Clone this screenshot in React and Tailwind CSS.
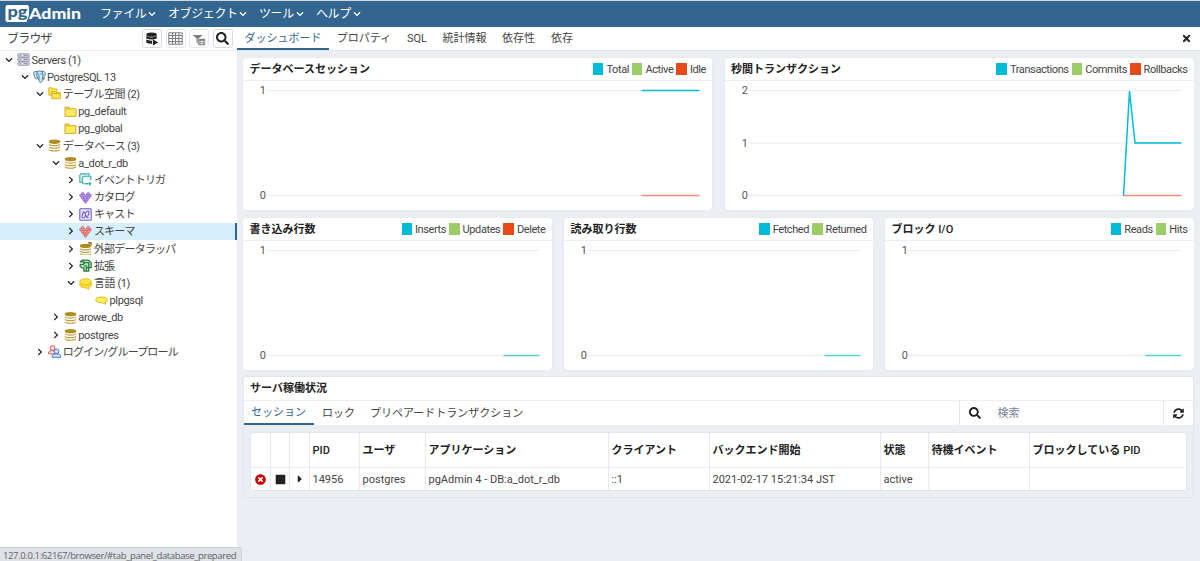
import { useState } from "react";
import clsx from "clsx";
import { FaCaretRight, FaChevronDown, FaChevronRight, FaSearch, FaSquare, FaSyncAlt, FaTimes, FaTimesCircle } from "react-icons/fa";

const CYAN = "#00bcd7";
const GREEN = "#9ccc65";
const RED = "#e64a19";

const MENUS = [
  { label: "ファイル", width: "w-[48px]", gap: "ml-[19px]" },
  { label: "オブジェクト", width: "w-[71px]", gap: "ml-[12px]" },
  { label: "ツール", width: "w-[37px]", gap: "ml-[12px]" },
  { label: "ヘルプ", width: "w-[37px]", gap: "ml-[12px]" },
];

const TABS = [
  { label: "ダッシュボード", width: "w-[92px]" },
  { label: "プロパティ", width: "w-[70px]" },
  { label: "SQL", width: "w-[36px]" },
  { label: "統計情報", width: "w-[59px]" },
  { label: "依存性", width: "w-[49px]" },
  { label: "依存", width: "w-[38px]" },
];

const TREE = [
  { label: "Servers (1)", depth: 0, icon: "servers", open: true },
  { label: "PostgreSQL 13", depth: 1, icon: "elephant", open: true },
  { label: "テーブル空間 (2)", depth: 2, icon: "folders", open: true, tracking: "tracking-[-0.5px]" },
  { label: "pg_default", depth: 3, icon: "folder" },
  { label: "pg_global", depth: 3, icon: "folder" },
  { label: "データベース (3)", depth: 2, icon: "databases", open: true, tracking: "tracking-[-0.5px]" },
  { label: "a_dot_r_db", depth: 3, icon: "database", open: true },
  { label: "イベントトリガ", depth: 4, icon: "trigger", open: false, tracking: "tracking-[-0.8px]" },
  { label: "カタログ", depth: 4, icon: "catalog", open: false, tracking: "tracking-[-0.8px]" },
  { label: "キャスト", depth: 4, icon: "cast", open: false, tracking: "tracking-[-0.8px]" },
  { label: "スキーマ", depth: 4, icon: "schema", open: false, tracking: "tracking-[-0.8px]" },
  { label: "外部データラッパ", depth: 4, icon: "wrapper", open: false, tracking: "tracking-[-0.8px]" },
  { label: "拡張", depth: 4, icon: "extension", open: false, tracking: "tracking-[-0.8px]" },
  { label: "言語 (1)", depth: 4, icon: "languages", open: true, tracking: "tracking-[-0.4px]" },
  { label: "plpgsql", depth: 5, icon: "language" },
  { label: "arowe_db", depth: 3, icon: "database", open: false },
  { label: "postgres", depth: 3, icon: "database", open: false },
  { label: "ログイン/グループロール", depth: 2, icon: "roles", open: false, tracking: "tracking-[-0.8px]" },
];

const COLUMNS = [
  { label: "", value: <FaTimesCircle className="mx-auto text-[#cc0000]" size={11} />, width: "w-[20px]" },
  { label: "", value: <FaSquare className="mx-auto" size={11} />, width: "w-[19px]" },
  { label: "", value: <FaCaretRight className="mx-auto" size={12} />, width: "w-[20px]" },
  { label: <span className="font-medium">PID</span>, value: "14956", width: "w-[50px]" },
  { label: "ユーザ", value: "postgres", width: "w-[66px]" },
  { label: "アプリケーション", value: "pgAdmin 4 - DB:a_dot_r_db", width: "w-[183px]" },
  { label: "クライアント", value: "::1", width: "w-[101px]" },
  { label: "バックエンド開始", value: "2021-02-17 15:21:34 JST", width: "w-[171px]" },
  { label: "状態", value: "active", width: "w-[48px]" },
  { label: "待機イベント", value: "", width: "w-[101px]" },
  { label: <>ブロックしている<span className="ml-[3px] font-medium">PID</span></>, value: "", width: "w-[155px]" },
];

// stack of flat disks with light gaps between them
function Disks({ y = 1 }) {
  return (
    <g>
      <path d={`M1 ${y + 2.5}q0-2.300 7-2.300t7 2.300v.8q0 2.200-7 2.200t-7-2.200z`} fill="#ad8e22" />
      {[5, 8.2, 11.4].map((dy) => (
        <path key={dy} d={`M1 ${y + dy}q1 2 7 2t7-2v1.200q0 2.200-7 2.200t-7-2.200z`} fill="#bfa03a" />
      ))}
    </g>
  );
}

function Hearts({ color, fill }) {
  const dots = [[4.5, 3.2], [11.5, 3.2], [2.3, 5.6], [6.1, 5.6], [9.9, 5.6], [13.7, 5.6], [4.2, 8.2], [8, 8.2], [11.8, 8.2], [6.1, 10.8], [9.9, 10.8], [8, 13.4]];
  return (
    <g fill={fill} stroke={color} strokeWidth="1">
      {dots.map(([x, y]) => (
        <circle key={`${x}-${y}`} cx={x} cy={y} r="1.500" />
      ))}
    </g>
  );
}

const ICONS = {
  servers: (
    <g fill="#e6e6ee" stroke="#8d8da6" strokeWidth="1.2">
      <rect x="1" y="1" width="14" height="4" rx="1" />
      <rect x="1" y="6" width="14" height="4" rx="1" />
      <rect x="1" y="11" width="14" height="4" rx="1" />
      <path d="M3 3h2M3 8h2M3 13h2M8 3h5M8 8h5M8 13h5" />
    </g>
  ),
  elephant: (
    <g fill="#d7e8f2" stroke="#336f9b" strokeWidth="1.1" strokeLinejoin="round" strokeLinecap="round">
      <path d="M5 2.2C2.5 .8 .8 2 1 4.6c.2 2.5 1.3 6 2.8 6.4 1 .2 1.6-1 1.8-1.8" />
      <path d="M5 2.2C8 .4 9.8 1 10.8 2 13 .8 15.3 2 15 4.7c-.3 2.6-1.4 4.5-2.6 5.5l2 .3c-1 1.2-2.3 1.1-3 .8.1 2.6-.5 4-2.1 4-1.7 0-2-1.3-2-4C5 10.4 3.8 7 5 2.2Z" />
      <path d="M10.8 2c1.8 2 1.9 5.2.6 8M7.3 11.3V6.5M5.8 5h1.4M9.6 5h.8" fill="none" />
    </g>
  ),
  folders: (
    <g fill="#fbe74a" stroke="#cfaf25" strokeWidth="1.1">
      <path d="M1 1h4l1 1.400h5V10H1z" />
      <path d="M4.500 5.500h4l1.300 1.600H15.300V14.500H4.500z" />
      <path d="M4.500 8h10.500" />
    </g>
  ),
  folder: (
    <g fill="#fbea62" stroke="#cfaf25" strokeWidth="1.2">
      <path d="M1.2 2.5h5l1.5 2h7v9.5H1.2z" />
      <path d="M1.5 4.8h6" />
    </g>
  ),
  databases: <Disks y={0.5} />,
  database: <Disks />,
  trigger: (
    <g fill="#e3f7f9" stroke="#39a8b1" strokeWidth="1.4" strokeLinejoin="round">
      <path d="M3 11.500H1V2.500L2.500 1H12.500v2.500" />
      <path d="M4 5.500L5.500 4h9v5M4 5.500V12l1 1.200h6" />
      <path d="M8 13.200h6.500m-2-2 2 2-2 2" fill="none" />
    </g>
  ),
  catalog: <Hearts color="#8b5fcf" fill="#c3a5ea" />,
  cast: (
    <g fill="#eeeafd" stroke="#6457c5" strokeWidth="1.3">
      <rect x="1" y="1" width="14" height="14" rx="1" />
      <ellipse cx="6" cy="9" rx="2" ry="3.5" transform="rotate(20 6 9)" />
      <ellipse cx="10" cy="7" rx="2" ry="3.5" transform="rotate(20 10 7)" />
      <path d="M4 5h3M9 12h3" />
    </g>
  ),
  schema: <Hearts color="#d45b5b" fill="#eea9a9" />,
  wrapper: (
    <g>
      <Disks y={2} />
      <path d="M9.500 5l5-4M11 .8h4v3.600" fill="none" stroke="#a6882a" strokeWidth="1.500" />
    </g>
  ),
  extension: (
    <g fill="#bfe6c4" stroke="#21793a" strokeWidth="1.500" strokeLinejoin="round">
      <path d="M1.500 3.500L4 1.500h7.500l3.500 3v6h-3v4.500H6V11H3.500L1.500 9V6.500H6V3.500z" />
      <path d="M6 6.500V4.500h6v6H9v4" />
      <path d="M6 8.500h4" />
    </g>
  ),
  languages: (
    <g fill="#fbe23c" stroke="#d8b414" strokeWidth="0.9">
      <path d="M1 8v2c0 2 3 3.300 7 3.300l4.500 2-1-2.300c2.500-.5 3.800-1.500 3.800-3V7z" />
      <path d="M.8 6c0-2.500 3-4 7.200-4s7.200 1.500 7.200 4-3 4-7.200 4S.8 8.500.8 6z" />
    </g>
  ),
  language: (
    <path d="M.8 7c0-2 3-3.300 7.200-3.300s7.200 1.300 7.200 3.300-1.500 2.700-3.300 3l1.500 2.300c-3 0-4.500-1-5.300-2C4 10.300.8 9.500.8 7z" fill="#fdf04f" stroke="#cfaa13" strokeWidth="1" />
  ),
  roles: (
    <g strokeWidth="1.2">
      <g fill="#fbdcdc" stroke="#d15b5b">
        <circle cx="5.500" cy="3.800" r="3" />
        <path d="M.8 11V8.500L3 7h5l2 1.500V11z" />
      </g>
      <g fill="#cfe3fa" stroke="#3f78c0">
        <circle cx="10.500" cy="7.800" r="2.900" />
        <path d="M5.300 15.200V12.500L7.500 11h6l2 1.500v2.700z" />
      </g>
    </g>
  ),
};

function TreeIcon({ name }) {
  return (
    <svg viewBox="0 0 16 16" className="ml-[3px] h-[13px] w-[13px] shrink-0">
      {ICONS[name]}
    </svg>
  );
}

function Logo() {
  return (
    <svg className="ml-[5px] h-[24px] w-[78px] shrink-0" viewBox="0 0 78 24">
      <path d="M2.500 3H21.500Q24 3 24 5.500V13L21.500 20H2.500Q.5 20 .5 18V5Q.5 3 2.500 3Z" fill="#fff" />
      <text x="2.500" y="14.500" fontSize="14.500" fontWeight="900" textLength="20" lengthAdjust="spacingAndGlyphs" fill="#326690" fontFamily="Lato, sans-serif">pg</text>
      <text x="24" y="16.500" fontSize="15.500" fontWeight="900" textLength="52" lengthAdjust="spacingAndGlyphs" fill="#fff" fontFamily="Lato, sans-serif">Admin</text>
    </svg>
  );
}

function ToolButton({ children, dim }) {
  return (
    <button className={clsx("flex h-[19px] w-[20px] items-center justify-center rounded-[3px] border", dim ? "border-[#e6e9ef] text-[#7b7b7b]" : "border-[#d5dae3] text-[#222]")}>
      {children}
    </button>
  );
}

function Sidebar() {
  return (
    <aside className="flex w-[237px] shrink-0 flex-col bg-white">
      <div className="flex h-[24px] shrink-0 items-center border-b border-[#ebeef3] pl-[7px]">
        <span className="grow text-[12px] tracking-[-0.8px]">ブラウザ</span>
        <div className="flex gap-[3.500px] pr-[4.500px]">
          <ToolButton>
            <svg viewBox="0 0 16 16" className="h-[14px] w-[14px]" fill="currentColor">
              <ellipse cx="7.500" cy="3" rx="6" ry="2.400" />
              <path d="M1.500 4.700q6 3 12 0v2.800q-6 2.400-12 0zM1.500 8.700q3.500 1.500 6.500 1.200v3.600q-4 .2-6.500-1.200zM9 8.300l6 3.600-6 3.600z" />
            </svg>
          </ToolButton>
          <ToolButton dim>
            <svg viewBox="0 0 15 13" className="h-[13px] w-[15px]" fill="none" stroke="currentColor">
              <path d="M.8.8h13.400v11.400H.8zM.8 3.500h13.400M.8 6.500h13.400M.8 9.500h13.400M4.500.8v11.400M7.500.8v11.400M10.800.8v11.400" />
            </svg>
          </ToolButton>
          <ToolButton dim>
            <svg viewBox="0 0 15 13" className="mt-[3px] h-[12px] w-[14px]" fill="currentColor">
              <path d="M.5 1h11L7.500 4.500V11L4.800 9V4.500z" />
              <path d="M6.500 5h8v7.500h-8z" stroke="#fff" strokeWidth=".6" />
              <path d="M7.500 8h6.500M7.500 10h6.500M10.600 7v5" stroke="#fff" strokeWidth=".7" />
            </svg>
          </ToolButton>
          <ToolButton>
            <FaSearch size={13} />
          </ToolButton>
        </div>
      </div>
      <ul>
        {TREE.map((node) => {
          const Chevron = node.open ? FaChevronDown : FaChevronRight;
          return (
            <li
              key={node.label}
              className={clsx("flex h-[17.200px] items-center whitespace-nowrap pl-[4px] text-[11px]", node.icon === "schema" && "border-r-2 border-[#326690] bg-[#d6effc]")}
            >
              <span className="shrink-0" style={{ width: node.depth * 15.6 }} />
              <span className="flex w-[10px] shrink-0 justify-center text-[#222]">
                {node.open !== undefined && <Chevron size={8} />}
              </span>
              <TreeIcon name={node.icon} />
              <span className={clsx("ml-[1.500px] pt-px", node.tracking || "tracking-[-0.350px]")}>{node.label}</span>
            </li>
          );
        })}
      </ul>
    </aside>
  );
}

function Chart({ title, legend, width, ticks, children }) {
  return (
    <section className="flex h-[152px] flex-col overflow-hidden rounded-[3px] bg-white shadow-[0_0_1px_#c5ccd8]" style={{ width }}>
      <header className="flex h-[23px] shrink-0 items-center border-b border-[#ebeef3] pl-[6.500px] pr-[6px]">
        <h3 className="grow text-[11px] font-bold text-[#222]">{title}</h3>
        <div className="flex gap-[3px] text-[11px] tracking-[-0.400px]">
          {legend.map(([name, color]) => (
            <span key={name} className="flex items-center gap-[3px]">
              <i className="h-[12px] w-[10.500px]" style={{ background: color }} />
              {name}
            </span>
          ))}
        </div>
      </header>
      <svg width={width} height="129" className="shrink-0 text-[11px]">
        {ticks.map((tick, i) => {
          const y = 9 + (i * 105) / (ticks.length - 1);
          return (
            <g key={tick}>
              <text x="23" y={y + 4} textAnchor="end" fill="#555">{tick}</text>
              <path d={`M23.500 ${y + 0.5}H${width - 12.5}`} stroke="#e9eaec" />
            </g>
          );
        })}
        {children}
      </svg>
    </section>
  );
}

function Activity() {
  return (
    <section className="flex h-[122px] flex-col overflow-hidden rounded-[3px] border border-[#e1e5ec] bg-[#ebeef3]">
      <h3 className="flex h-[24px] shrink-0 items-center border-b border-[#ebeef3] bg-white pl-[6px] text-[11px] font-bold text-[#222]">サーバ稼働状況</h3>
      <div className="flex h-[24px] shrink-0 bg-white text-[11px]">
        <span className="-ml-px flex w-[71px] items-center justify-center border-b-2 border-[#326690] pt-px text-[#326690]">セッション</span>
        <span className="flex w-[49px] items-center justify-center">ロック</span>
        <span className="flex items-center pl-[7px]">プリペアードトランザクション</span>
        <div className="ml-auto flex w-[205px] items-center border-x border-[#e1e5ec] pl-[9px]">
          <FaSearch size={12} className="text-[#222]" />
          <span className="ml-[17px] text-[#7b8294]">検索</span>
        </div>
        <span className="flex w-[29px] items-center justify-center text-[#222]">
          <FaSyncAlt size={11} />
        </span>
      </div>
      <div className="mx-[6px] mt-[7px] flex h-[59px] overflow-hidden rounded-[3px] border border-[#e1e5ec] bg-white text-[11px]">
        {COLUMNS.map((col, i) => (
          <div key={i} className={clsx("flex shrink-0 flex-col whitespace-nowrap border-r border-[#e6e9ef] last:border-r-0", col.width)}>
            <div className="flex h-[35px] items-center border-b border-[#e6e9ef] pl-[2.500px] font-bold text-[#222]">{col.label}</div>
            <div className={clsx("flex grow items-center", i > 2 ? "pl-[2.500px]" : "text-[#222]")}>{col.value}</div>
          </div>
        ))}
      </div>
    </section>
  );
}

export default function App() {
  const [tab, setTab] = useState(0);

  return (
    <div className="relative flex h-[561px] w-[1200px] flex-col overflow-hidden bg-[#ebeef3] font-['Roboto','Noto_Sans_CJK_JP',sans-serif] text-[11px] leading-none text-[#444]">
      <nav className="flex h-[27px] shrink-0 items-center border-t border-[#d5d7da] bg-[#326690] text-[12px] text-white">
        <Logo />
        {MENUS.map((m, i) => (
          <span key={m.label} className={clsx("flex items-center whitespace-nowrap", i === 0 ? "ml-[17px]" : m.gap)}>
            <span className={clsx("tracking-[-0.400px]", m.width)}>{m.label}</span>
            <FaChevronDown size={8} />
          </span>
        ))}
      </nav>

      <div className="flex grow">
        <Sidebar />
        <main className="flex min-w-0 grow flex-col">
          <div className="flex h-[24px] shrink-0 items-stretch border-b border-[#e1e5ec] bg-white">
            {TABS.map((t, i) => (
              <button key={t.label} onClick={() => setTab(i)} className={clsx("shrink-0 whitespace-nowrap", t.width, tab === i && "border-b-2 border-[#326690] pt-px text-[#326690]")}>
                {t.label}
              </button>
            ))}
            <span className="ml-auto flex items-center pr-[8px] text-[#222]">
              <FaTimes size={11} />
            </span>
          </div>

          <div className="flex flex-col pl-[6px] pr-[6.500px] pt-[7px]">
            <div className="flex justify-between">
              <Chart title="データベースセッション" width={469} ticks={[1, 0]} legend={[["Total", CYAN], ["Active", GREEN], ["Idle", RED]]}>
                <path d="M398.500 9.500H456.500" stroke={CYAN} strokeWidth="1.500" />
                <path d="M398.500 114.500H456.500" stroke="#f0907a" strokeWidth="1.500" />
              </Chart>
              <Chart title="秒間トランザクション" width={469} ticks={[2, 1, 0]} legend={[["Transactions", CYAN], ["Commits", GREEN], ["Rollbacks", RED]]}>
                <path d="M398.500 114.500H456.500" stroke="#f0907a" strokeWidth="1.500" />
                <path d="M398.500 114.500L404.500 10L410 62H456.500" fill="none" stroke={CYAN} strokeWidth="1.500" />
              </Chart>
            </div>
            <div className="mt-[8px] flex justify-between">
              <Chart title="書き込み行数" width={308.5} ticks={[1, 0]} legend={[["Inserts", CYAN], ["Updates", GREEN], ["Delete", RED]]}>
                <path d="M260.500 114.500H296.500" stroke="#5bc8c7" strokeWidth="1.500" />
              </Chart>
              <Chart title="読み取り行数" width={308.5} ticks={[1, 0]} legend={[["Fetched", CYAN], ["Returned", GREEN]]}>
                <path d="M260.500 114.500H296.500" stroke="#5bd0cd" strokeWidth="1.500" />
              </Chart>
              <Chart title={<>ブロック <span className="font-medium">I/O</span></>} width={308.5} ticks={[1, 0]} legend={[["Reads", CYAN], ["Hits", GREEN]]}>
                <path d="M260.500 114.500H296.500" stroke="#5bd0cd" strokeWidth="1.500" />
              </Chart>
            </div>
            <div className="mt-[6px]">
              <Activity />
            </div>
          </div>
        </main>
      </div>

      {/* Link status shown by the browser */}
      <div className="absolute bottom-0 left-0 h-[14px] w-[242px] whitespace-nowrap rounded-tr-[3px] border-r border-t border-[#cfd2d7] bg-[#dee1e6] pl-[3px] pt-[3px] font-['Open_Sans',sans-serif] text-[9.500px] tracking-[-0.380px] text-[#5f6368]">
        127.0.0.1:62167/browser/#tab_panel_database_prepared
      </div>
    </div>
  );
}
